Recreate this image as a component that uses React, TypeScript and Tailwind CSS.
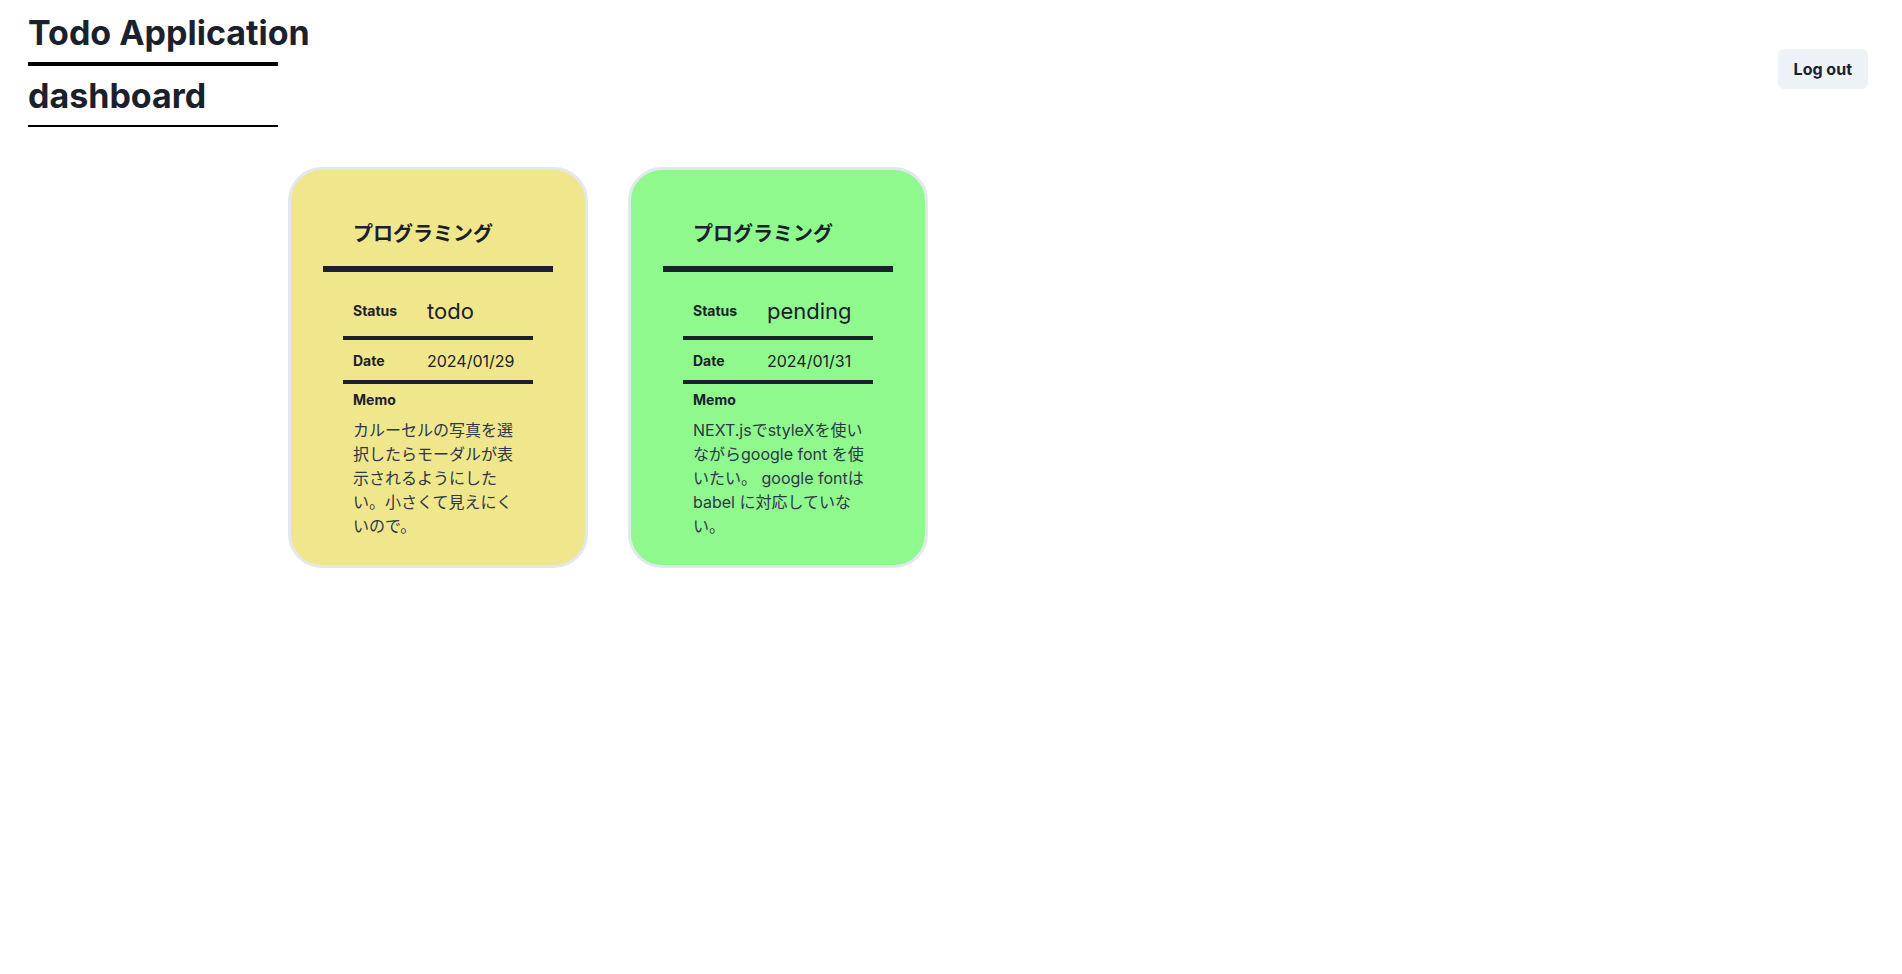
const todos = [
  {
    title: "プログラミング",
    status: "todo",
    date: "2024/01/29",
    memo: "カルーセルの写真を選択したらモーダルが表示されるようにしたい。小さくて見えにくいので。",
    color: "bg-[#f0e68c]",
  },
  {
    title: "プログラミング",
    status: "pending",
    date: "2024/01/31",
    memo: "NEXT.jsでstyleXを使いながらgoogle font を使いたい。 google fontはbabel に対応していない。",
    color: "bg-[#90f98e]",
  },
];

function TodoCard({ todo }: { todo: (typeof todos)[number] }) {
  return (
    <div
      className={`${todo.color} w-[300px] h-[401px] rounded-[34px] border-[3px] border-[#e2e8f0] pt-[50px]`}
    >
      <h3 className="w-[230px] mx-auto pl-[30px] pb-[18px] border-b-[6px] border-[#1a202c] text-xl leading-7 font-bold">
        {todo.title}
      </h3>
      <div className="w-[190px] mx-auto">
        <div className="flex items-center pt-[23px] pb-[9px] border-b-4 border-[#1a202c] px-[10px]">
          <span className="w-[74px] text-sm font-bold">Status</span>
          <span className="text-[22px] leading-8">{todo.status}</span>
        </div>
        <div className="flex items-center pt-[9px] pb-[7px] border-b-4 border-[#1a202c] px-[10px]">
          <span className="w-[74px] text-sm font-bold">Date</span>
          <span className="text-base leading-6">{todo.date}</span>
        </div>
        <div className="px-[10px] pt-[6px]">
          <p className="text-sm leading-5 font-bold">Memo</p>
          <p className="mt-[8px] w-[175px] text-base leading-6 text-[#2d3748]">{todo.memo}</p>
        </div>
      </div>
    </div>
  );
}

export default function App() {
  return (
    <div
      className="min-h-screen bg-white text-[#1a202c]"
      style={{ fontFamily: 'Inter, "Noto Sans CJK JP", sans-serif' }}
    >
      {/* Header */}
      <header className="flex items-start justify-between pl-[28px] pr-[34px]">
        <div className="pt-[13px]">
          <h1 className="w-[250px] whitespace-nowrap pb-[9px] border-b-4 border-black text-[34px] leading-10 font-bold">
            Todo Application
          </h1>
          <h2 className="w-[250px] pt-[10px] pb-[9px] border-b-2 border-black text-[34px] leading-10 font-bold">
            dashboard
          </h2>
        </div>
        <button className="mt-[49px] h-10 px-4 rounded-md bg-[#edf2f7] text-base font-bold">
          Log out
        </button>
      </header>

      {/* Cards */}
      <main className="flex gap-[40px] pl-[288px] pt-[40px]">
        {todos.map((t, i) => (
          <TodoCard key={i} todo={t} />
        ))}
      </main>
    </div>
  );
}
